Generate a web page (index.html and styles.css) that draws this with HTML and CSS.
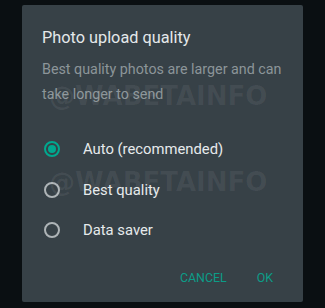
FILE: index.html
```html
<!DOCTYPE html>
<html>
<head>
<meta charset="utf-8">
<link rel="stylesheet" href="styles.css">
</head>
<body>
<div class="backdrop">
  <div class="dialog">
    <h1 class="title">Photo upload quality</h1>
    <p class="desc">Best quality photos are larger and can take longer to send</p>
    <div class="options">
      <div class="option"><span class="radio checked"></span><span class="label">Auto (recommended)</span></div>
      <div class="option"><span class="radio"></span><span class="label">Best quality</span></div>
      <div class="option"><span class="radio"></span><span class="label">Data saver</span></div>
    </div>
    <div class="actions">
      <span class="btn">CANCEL</span>
      <span class="btn">OK</span>
    </div>
    <div class="wm wm1">@WABETAINFO</div>
    <div class="wm wm2">@WABETAINFO</div>
  </div>
</div>
</body>
</html>
```

FILE: styles.css
```css
html, body {
  margin: 0;
  padding: 0;
  background: #0a0f12;
  width: 325px;
  height: 308px;
  overflow: hidden;
  font-family: Roboto, "Liberation Sans", sans-serif;
}
.backdrop {
  padding: 5px 22px 6px 22px;
}
.dialog {
  position: relative;
  box-sizing: border-box;
  width: 281px;
  height: 297px;
  background: #374147;
  border-radius: 2px;
  padding: 21px 21px 0 20px;
  display: flex;
  flex-direction: column;
}
.title {
  margin: 0;
  font-size: 16.3px;
  font-weight: 400;
  line-height: 24px;
  color: #e4e8ea;
}
.desc {
  margin: 7px 0 0 0;
  font-size: 14.3px;
  line-height: 25px;
  color: #8c9599;
  width: 250px;
}
.options {
  margin-top: 22px;
  padding-left: 2px;
  display: flex;
  flex-direction: column;
}
.option {
  height: 40.5px;
  display: flex;
  align-items: center;
}
.radio {
  box-sizing: border-box;
  width: 16px;
  height: 16px;
  border: 2px solid #aeb4b7;
  border-radius: 50%;
  display: flex;
  align-items: center;
  justify-content: center;
  flex: none;
}
.radio.checked {
  border-color: #00a88f;
}
.radio.checked::after {
  content: "";
  width: 8px;
  height: 8px;
  border-radius: 50%;
  background: #00a88f;
}
.label {
  margin-left: 23px;
  font-size: 14.8px;
  color: #e6eaec;
}
.actions {
  margin-top: 17px;
  display: flex;
  justify-content: flex-end;
  gap: 14px;
  padding-right: 1px;
}
.btn {
  font-size: 12.4px;
  font-weight: 400;
  color: #0c9c87;
  padding: 0 8px;
  line-height: 20px;
}
.wm {
  position: absolute;
  left: 27px;
  font-family: "DejaVu Sans", sans-serif;
  font-weight: 700;
  font-size: 26px;
  color: rgba(255, 255, 255, 0.065);
  line-height: 30px;
  pointer-events: none;
  white-space: nowrap;
}
.wm1 { top: 76px; }
.wm2 { top: 162px; }
```
